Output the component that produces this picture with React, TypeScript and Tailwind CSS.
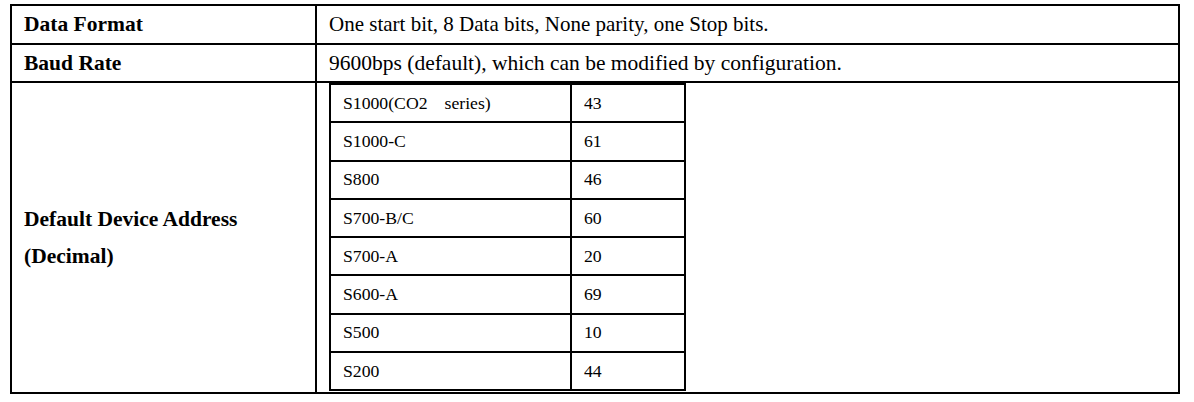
import React from 'react';

const devices = [
    { model: 'S1000(CO2', extra: 'series)', addr: '43' },
    { model: 'S1000-C', addr: '61' },
    { model: 'S800', addr: '46' },
    { model: 'S700-B/C', addr: '60' },
    { model: 'S700-A', addr: '20' },
    { model: 'S600-A', addr: '69' },
    { model: 'S500', addr: '10' },
    { model: 'S200', addr: '44' },
];

export default function App() {
    return (
        <div className="w-[1194px] h-[402px] bg-white text-black font-['Liberation_Serif','Times_New_Roman',serif] pt-[4px] pl-[10px]">
            <div className="w-[1170px] border-2 border-black">
                <div className="flex h-[39px] border-b-2 border-black">
                    <div className="w-[305px] border-r-2 border-black flex items-center pl-[12px] text-[21.5px] font-bold">Data Format</div>
                    <div className="flex-1 flex items-center pl-[12px] text-[21px]">One start bit, 8 Data bits, None parity, one Stop bits.</div>
                </div>
                <div className="flex h-[38px] border-b-2 border-black">
                    <div className="w-[305px] border-r-2 border-black flex items-center pl-[12px] text-[21.5px] font-bold">Baud Rate</div>
                    <div className="flex-1 flex items-center pl-[12px] text-[21.5px]">9600bps (default), which can be modified by configuration.</div>
                </div>
                <div className="flex h-[309px]">
                    <div className="w-[305px] border-r-2 border-black flex items-center pl-[12px] text-[21.5px] font-bold leading-[37px]">
                        <div>
                            <div>Default Device Address</div>
                            <div>(Decimal)</div>
                        </div>
                    </div>
                    <div className="flex-1 pl-[12px]">
                        <div className="w-[357px] h-[308px] border-2 border-black flex flex-col text-[17.7px]">
                            {devices.map((d, i) => (
                                <div key={d.model} className={`flex-1 flex ${i < devices.length - 1 ? 'border-b-2 border-black' : ''}`}>
                                    <div className="w-[241px] border-r-2 border-black flex items-center pl-[12px]">
                                        {d.model}
                                        {d.extra && <span className="ml-[17px]">{d.extra}</span>}
                                    </div>
                                    <div className="flex-1 flex items-center pl-[12px]">{d.addr}</div>
                                </div>
                            ))}
                        </div>
                    </div>
                </div>
            </div>
        </div>
    );
}
